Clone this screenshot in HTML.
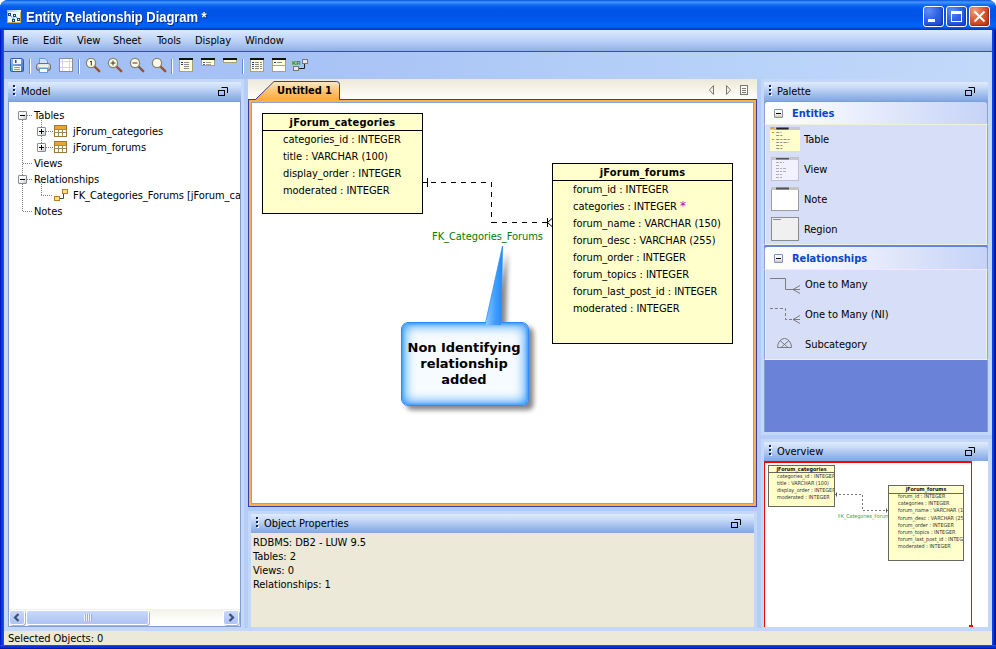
<!DOCTYPE html>
<html><head><meta charset="utf-8"><title>Entity Relationship Diagram</title>
<style>
*{box-sizing:border-box;margin:0;padding:0}
html,body{width:996px;height:649px;overflow:hidden;background:#fff}
body{font-family:"DejaVu Sans Condensed","Liberation Sans",sans-serif;font-size:11px;color:#000;position:relative;letter-spacing:-0.05px}
.abs{position:absolute}
.t{position:absolute;white-space:nowrap;line-height:13px}
#win{position:absolute;left:0;top:0;width:996px;height:649px;background:linear-gradient(90deg,#0018c0 0,#0018c0 1px,#0534de 1px,#0a40e6 3px,#0a58ec 3px,#0a58ec 4px,#0a40e6 4px,#0a40e6 992px,#0a48ea 992px,#0838e0 994px,#0020b0 994px,#001088 996px);border-radius:8px 8px 0 0;overflow:hidden}
#title{position:absolute;left:0;top:0;width:996px;height:30px;background:linear-gradient(180deg,#0a52da 0%,#2f86f8 5%,#3d92fb 9%,#1a70f2 15%,#0560ec 22%,#0056e8 32%,#0054e6 52%,#005aee 68%,#0062fa 82%,#0060f6 88%,#0052e4 93%,#0040cc 97%,#0034b8 100%)}
#title .cap{position:absolute;left:26px;top:9px;font-family:"Liberation Sans",sans-serif;font-weight:bold;font-size:14px;transform:scaleX(0.935);transform-origin:0 0;color:#fff;text-shadow:1px 1px 0 #0a2a8a;letter-spacing:-0.1px;line-height:17px;white-space:nowrap}
#client{position:absolute;left:4px;top:30px;width:988px;height:615px;background:#c3d8f9}
#menubar{position:absolute;left:0;top:0;width:988px;height:21px;background:linear-gradient(180deg,#dde9fc 0%,#cfe0fa 22%,#b6cef4 58%,#9bb8ea 88%,#90b0e6 100%)}
#menuline{position:absolute;left:0;top:21px;width:988px;height:1px;background:#3b4fa0}
#toolbar{position:absolute;left:0;top:22px;width:988px;height:27px;background:linear-gradient(90deg,#a2bff4 0%,#a7c3f5 30%,#b2cdf7 60%,#c3d9fa 100%)}
.mi{position:absolute;top:4px;line-height:13px}
.ph{position:absolute;height:19px;background:linear-gradient(180deg,#dfeafc 0%,#ccddf8 25%,#b1caf1 50%,#98b7ea 75%,#82a7e3 100%)}
.ph .lbl{position:absolute;left:13px;top:3px;line-height:13px;white-space:nowrap}
.ph .grip{position:absolute;left:5px;top:3px;width:3px;height:11px;background:radial-gradient(circle,#000 0,#000 0) 0 0/0 0 no-repeat}
.ph .grip i{position:absolute;left:0;width:2px;height:2px;background:#14246e;box-shadow:1px 1px 0 #fff}
.ph .mx{position:absolute;right:13px;top:5px;width:10px;height:9px}
.sep{position:absolute;top:7px;width:1px;height:15px;background:#6a8ad2;box-shadow:1px 0 0 #fff}

/* panels */
.panel{position:absolute;background:#fff}
.tree .t{line-height:13px}
.dotsh{position:absolute;height:1px;background:repeating-linear-gradient(90deg,#808080 0,#808080 1px,transparent 1px,transparent 2px)}
.dotsv{position:absolute;width:1px;background:repeating-linear-gradient(180deg,#808080 0,#808080 1px,transparent 1px,transparent 2px)}
.pm{position:absolute;width:9px;height:9px;border:1px solid #7e8ba3;background:linear-gradient(135deg,#fff 0%,#fff 40%,#c9c6b8 100%);border-radius:1px}
.pm:before{content:"";position:absolute;left:1px;top:3px;width:5px;height:1px;background:#000}
.pm.plus:after{content:"";position:absolute;left:3px;top:1px;width:1px;height:5px;background:#000}
.ent{position:absolute;background:#ffffcc;border:1px solid #000}
.ent .hd{position:absolute;left:0;top:0;right:0;height:17px;border-bottom:1px solid #000;text-align:center;font-weight:bold;line-height:17px;font-size:11px;letter-spacing:0.200px}
.ent .r{position:absolute;left:20px;white-space:nowrap;line-height:13px}

.sbb{width:14px;height:13px;border-radius:2px;background:linear-gradient(180deg,#c9d9fb 0%,#bacdf7 50%,#aec4f5 100%);box-shadow:0 0 0 1px #fff, 1px 1px 0 1px #9fb5e2}

.sec{position:absolute;left:764px;width:224px;border-left:1px solid #8aa4d4;border-right:1px solid #8aa4d4}
.sech{position:absolute;left:764px;width:224px;height:23px;border-radius:3px 3px 0 0;background:linear-gradient(90deg,#ffffff 0%,#eef2fd 35%,#c6d3f7 100%);border-left:1px solid #8aa4d4;border-right:1px solid #8aa4d4}
.sech b{position:absolute;left:27px;top:5px;line-height:13px;color:#0c46c4;font-size:11px;white-space:nowrap}
.pm2{position:absolute;left:9px;top:7px;width:9px;height:9px;border:1px solid #7a92b8;border-radius:1px;background:linear-gradient(180deg,#fff 0%,#f4f2ea 55%,#cfc9b8 100%)}
.pm2:before{content:"";position:absolute;left:1px;top:3px;width:5px;height:1px;background:#000}
.secb{position:absolute;left:764px;width:224px;background:#d6dff7;border-left:1px solid #8aa4d4;border-top:1px solid #f1eedc;border-bottom:1px solid #f1eedc;border-right:1px solid #8aa4d4;box-shadow:inset 1px 0 0 #f1eedc,inset -1px 0 0 #f1eedc}
.secb .t{left:40px}

.ment{position:absolute;background:#ffffcc;border:1px solid #686860;overflow:hidden;font-size:5.400px;color:#333;letter-spacing:0}
.ment .hd{position:absolute;left:0;right:0;top:0;height:6px;border-bottom:1px solid #686860;text-align:center;font-weight:bold;line-height:6px;font-size:5.400px;white-space:nowrap;color:#111}
.ment .r{position:absolute;left:8px;white-space:nowrap;line-height:6px}

.tbtn{position:absolute;top:6px;width:21px;height:21px;border:1px solid #fff;border-radius:3px;background:radial-gradient(circle at 25% 20%,#5f8ff5 0%,#2f62e8 45%,#1b45cf 100%);box-shadow:inset -1px -1px 2px rgba(0,20,120,.5)}
.tbtn.close{background:radial-gradient(circle at 25% 20%,#f0a080 0%,#e0552e 45%,#c23210 100%);box-shadow:inset -1px -1px 2px rgba(100,10,0,.5)}
</style></head><body>
<div id="win">
<div id="title">
  <svg class="abs" style="left:7px;top:10px" width="14" height="13" viewBox="0 0 14 13"><defs><linearGradient id="ib" x1="0" y1="0" x2="1" y2="0"><stop offset="0" stop-color="#8cc0ee"/><stop offset="1" stop-color="#f4f8fe"/></linearGradient></defs><rect x="0" y="2" width="14" height="11" fill="#d9a94a"/><rect x="1" y="2" width="12" height="10" fill="#eef6ff"/><rect x="0" y="0" width="14" height="2" fill="url(#ib)"/><path d="M2.500 4.500 L6.500 9.500 M7.500 5.500 L6.500 9.500 M7.500 5.500 L11.500 9" stroke="#1c5a9a" stroke-dasharray="1 1" fill="none"/><rect x="1.500" y="3.500" width="2" height="2" fill="#fff" stroke="#0c4a8a"/><rect x="6.500" y="4.500" width="2" height="2" fill="#fff" stroke="#0c4a8a"/><rect x="5.500" y="9.500" width="2" height="2" fill="#fff" stroke="#0c4a8a"/><rect x="10.500" y="8.500" width="2" height="2" fill="#fff" stroke="#0c4a8a"/></svg>
  <div class="cap">Entity Relationship Diagram *</div>
  <div class="tbtn" style="left:923px"><div class="abs" style="left:4px;top:12px;width:7px;height:3px;background:#fff"></div></div>
  <div class="tbtn" style="left:946px"><div class="abs" style="left:4px;top:4px;width:11px;height:11px;border:1px solid #fff;border-top-width:3px"></div></div>
  <div class="tbtn close" style="left:969px"><svg class="abs" style="left:3px;top:3px" width="13" height="13" viewBox="0 0 13 13"><path d="M1.500 1.500 L11.500 11.500 M11.500 1.500 L1.500 11.500" stroke="#fff" stroke-width="2"/></svg></div>

</div>
<div id="client">
  <div id="menubar">
    <span class="mi" style="left:8px">File</span>
    <span class="mi" style="left:39px">Edit</span>
    <span class="mi" style="left:73px">View</span>
    <span class="mi" style="left:109px">Sheet</span>
    <span class="mi" style="left:153px">Tools</span>
    <span class="mi" style="left:191px">Display</span>
    <span class="mi" style="left:241px">Window</span>
  </div>
  <div id="menuline"></div>
  <div id="toolbar">
    <!-- save -->
    <svg class="abs" style="left:6px;top:6px" width="14" height="14" viewBox="0 0 14 14"><defs><linearGradient id="sv" x1="0" y1="0" x2="1" y2="1"><stop offset="0" stop-color="#9fbff0"/><stop offset="1" stop-color="#3f6fc4"/></linearGradient></defs><path d="M0.500 1.500 Q0.500 0.500 1.500 0.500 H12 L13.500 2 V12.500 Q13.500 13.500 12.500 13.500 H1.500 Q0.500 13.500 0.500 12.500 Z" fill="url(#sv)" stroke="#2f5cab"/><rect x="3" y="1" width="8" height="5" fill="#f4f7fd"/><rect x="5" y="2" width="1.500" height="3" fill="#2f4f8f"/><rect x="3" y="8" width="8" height="5" fill="#fff"/><rect x="4" y="9" width="6" height="1.200" fill="#7fbf3f"/><rect x="4" y="11" width="6" height="1.200" fill="#7fbf3f"/></svg>
    <div class="sep" style="left:25px"></div>
    <!-- print -->
    <svg class="abs" style="left:32px;top:6px" width="15" height="15" viewBox="0 0 15 15"><defs><linearGradient id="pg" x1="0" y1="0" x2="0" y2="1"><stop offset="0" stop-color="#f4f4f4"/><stop offset="0.500" stop-color="#c8c8c8"/><stop offset="1" stop-color="#8e8e8e"/></linearGradient></defs><path d="M3.500 7 V0.500 H9 L11.500 3 V7 Z" fill="#cfe2fa" stroke="#5f9be0"/><rect x="0.500" y="5.500" width="14" height="7" rx="2.500" fill="url(#pg)" stroke="#6e6e6e"/><rect x="3.500" y="10.500" width="8" height="4" fill="#fff" stroke="#5f9be0"/><rect x="3" y="7.500" width="9" height="1.500" fill="#f8f8f8"/></svg>
    <!-- grid -->
    <svg class="abs" style="left:55px;top:6px" width="14" height="14" viewBox="0 0 14 14"><rect x="0.500" y="0.500" width="13" height="13" fill="#fff" stroke="#8c8c90"/><path d="M3.500 1 V13 M10.500 1 V13 M1 3.500 H13 M1 9.500 H13" stroke="#d4d0f8" fill="none"/></svg>
    <div class="sep" style="left:74px"></div>
    <!-- zoom 1 -->
    <svg class="abs" style="left:81px;top:5px" width="16" height="16" viewBox="0 0 16 16"><path d="M9.500 9.500 L14.200 14.200" stroke="#9b5230" stroke-width="2.400" stroke-linecap="round"/><circle cx="6" cy="6" r="4.600" fill="#fffbe8" stroke="#86866e" stroke-width="1.300"/><path d="M5 5 L6.300 4 V8.500" stroke="#333" fill="none" stroke-width="1"/></svg>
    <svg class="abs" style="left:103px;top:5px" width="16" height="16" viewBox="0 0 16 16"><path d="M9.500 9.500 L14.200 14.200" stroke="#9b5230" stroke-width="2.400" stroke-linecap="round"/><circle cx="6" cy="6" r="4.600" fill="#fffbe8" stroke="#86866e" stroke-width="1.300"/><path d="M3.500 6 H8.500 M6 3.500 V8.500" stroke="#3a3a20" fill="none" stroke-width="1"/></svg>
    <svg class="abs" style="left:125px;top:5px" width="16" height="16" viewBox="0 0 16 16"><path d="M9.500 9.500 L14.200 14.200" stroke="#9b5230" stroke-width="2.400" stroke-linecap="round"/><circle cx="6" cy="6" r="4.600" fill="#fffbe8" stroke="#86866e" stroke-width="1.300"/><path d="M3.500 6 H8.500" stroke="#5a2a20" fill="none" stroke-width="1"/></svg>
    <svg class="abs" style="left:147px;top:5px" width="16" height="16" viewBox="0 0 16 16"><path d="M9.500 9.500 L14.200 14.200" stroke="#9b5230" stroke-width="2.400" stroke-linecap="round"/><circle cx="6" cy="6" r="4.600" fill="#fffbe8" stroke="#86866e" stroke-width="1.300"/></svg>
    <div class="sep" style="left:167px"></div>
    <!-- display icons -->
    <svg class="abs" style="left:175px;top:6px" width="14" height="14" viewBox="0 0 14 14"><rect x="0.500" y="0.500" width="13" height="13" fill="#ffffd8" stroke="#a8a078"/><rect x="0" y="0" width="14" height="2" fill="#111"/><path d="M2 4.500 H4 M2 6.500 H4" stroke="#1a3a9a"/><path d="M5 4.500 H10 M5 6.500 H10 M5 8.500 H10 M5 10.500 H10" stroke="#8c8c8c"/></svg>
    <svg class="abs" style="left:197px;top:6px" width="14" height="8" viewBox="0 0 14 8"><rect x="0.500" y="0.500" width="13" height="7" fill="#ffffd8" stroke="#a8a078"/><rect x="0" y="0" width="14" height="2" fill="#111"/><path d="M2 4.500 H4 M2 6.500 H4" stroke="#1a3a9a" stroke-width="0.800"/><path d="M5 4.500 H10 M5 6.500 H10" stroke="#8c8c8c" stroke-width="0.800"/></svg>
    <svg class="abs" style="left:219px;top:6px" width="14" height="5" viewBox="0 0 14 5"><rect x="0.500" y="0.500" width="13" height="4" fill="#ffffd8" stroke="#a8a078"/><rect x="0" y="0" width="14" height="2" fill="#111"/></svg>
    <div class="sep" style="left:238px"></div>
    <svg class="abs" style="left:246px;top:6px" width="14" height="14" viewBox="0 0 14 14"><rect x="0.500" y="0.500" width="13" height="13" fill="#ffffd8" stroke="#a8a078"/><rect x="0" y="0" width="14" height="2" fill="#111"/><path d="M2 4.500 H4 M2 6.500 H4" stroke="#1a3a9a"/><path d="M2 8.500 H4 M2 10.500 H4" stroke="#5a6a9a"/><path d="M5 4.500 H9 M10 4.500 H12 M5 6.500 H9 M10 6.500 H12 M5 8.500 H9 M10 8.500 H12 M5 10.500 H9 M10 10.500 H12" stroke="#8c8c8c"/></svg>
    <svg class="abs" style="left:268px;top:6px" width="14" height="14" viewBox="0 0 14 14"><rect x="0.500" y="0.500" width="13" height="13" fill="#ffffd8" stroke="#a8a078"/><rect x="1" y="8" width="12" height="5" fill="#fff"/><path d="M0 7.500 H14" stroke="#a8a078"/><rect x="0" y="0" width="14" height="2" fill="#111"/><path d="M2 4.500 H4" stroke="#1a3a9a"/><path d="M5 4.500 H10" stroke="#8c8c8c"/></svg>
    <svg class="abs" style="left:288px;top:7px" width="16" height="12" viewBox="0 0 16 12"><path d="M6 9.500 H12.500 V4" stroke="#222" fill="none"/><rect x="10.500" y="0.500" width="5" height="4" fill="#e8e8e8" stroke="#777"/><rect x="1.500" y="7.500" width="5" height="4" fill="#e8e8e8" stroke="#777"/><text x="0" y="6" font-family="Liberation Sans,sans-serif" font-size="6" font-weight="bold" fill="#1f8a1f">KR</text></svg>
  </div>
</div>

<!-- ===== splitters ===== -->
<div class="abs" style="left:244px;top:79px;width:4px;height:549px;background:#b5cdf6"></div>
<div class="abs" style="left:757px;top:79px;width:4px;height:549px;background:#b5cdf6"></div>
<div class="abs" style="left:248px;top:507px;width:509px;height:4px;background:#b0c9f5"></div>
<div class="abs" style="left:761px;top:435px;width:231px;height:4px;background:#b5cdf6"></div>
<!-- ===== Model panel ===== -->
<div class="ph" style="left:8px;top:82px;width:233px"><div class="grip"><i style="top:0"></i><i style="top:4px"></i><i style="top:8px"></i></div><div class="lbl">Model</div>
  <svg class="mx" viewBox="0 0 10 9"><path d="M3.500 0.500 H9.500 V6" stroke="#000" fill="none"/><rect x="0.500" y="3.500" width="6" height="5" fill="none" stroke="#000"/></svg></div>
<div class="panel tree" id="model" style="left:8px;top:101px;width:233px;height:526px;border-top:1px solid #7f9fd3;border-left:1px solid #7f9fd3;border-right:1px solid #7f9fd3;border-bottom:1px solid #7f9fd3">
</div>

<div class="abs" id="treelayer" style="left:0;top:0;width:0;height:0">
  <div class="dotsv" style="left:22px;top:120px;height:91px"></div>
  <div class="dotsv" style="left:41px;top:120px;height:7px"></div>
  <div class="dotsv" style="left:41px;top:136px;height:7px"></div>
  <div class="dotsv" style="left:41px;top:184px;height:11px"></div>
  <div class="dotsh" style="left:27px;top:115px;width:6px"></div>
  <div class="dotsh" style="left:46px;top:131px;width:7px"></div>
  <div class="dotsh" style="left:46px;top:147px;width:7px"></div>
  <div class="dotsh" style="left:23px;top:163px;width:10px"></div>
  <div class="dotsh" style="left:27px;top:179px;width:6px"></div>
  <div class="dotsh" style="left:41px;top:195px;width:12px"></div>
  <div class="dotsh" style="left:23px;top:211px;width:10px"></div>
  <div class="pm" style="left:18px;top:111px"></div>
  <div class="pm plus" style="left:37px;top:127px"></div>
  <div class="pm plus" style="left:37px;top:143px"></div>
  <div class="pm" style="left:18px;top:175px"></div>
  <div class="t" style="left:34px;top:109px">Tables</div>
  <svg class="abs" style="left:54px;top:125px" width="13" height="12" viewBox="0 0 13 12"><rect x="0.500" y="0.500" width="12" height="11" fill="#fff" stroke="#9a7a3a"/><rect x="1" y="1" width="11" height="3" fill="#e8a33d"/><path d="M1 4.500 H12 M1 7.500 H12 M4.500 4 V11 M8.500 4 V11" stroke="#9a8a6a" fill="none"/></svg>
  <div class="t" style="left:73px;top:125px">jForum_categories</div>
  <svg class="abs" style="left:54px;top:141px" width="13" height="12" viewBox="0 0 13 12"><rect x="0.500" y="0.500" width="12" height="11" fill="#fff" stroke="#9a7a3a"/><rect x="1" y="1" width="11" height="3" fill="#e8a33d"/><path d="M1 4.500 H12 M1 7.500 H12 M4.500 4 V11 M8.500 4 V11" stroke="#9a8a6a" fill="none"/></svg>
  <div class="t" style="left:73px;top:141px">jForum_forums</div>
  <div class="t" style="left:34px;top:157px">Views</div>
  <div class="t" style="left:34px;top:173px">Relationships</div>
  <svg class="abs" style="left:54px;top:189px" width="14" height="12" viewBox="0 0 14 12"><path d="M6 9.500 H9.500 V5" stroke="#444" fill="none"/><rect x="8.500" y="0.500" width="5" height="4" fill="#ffe08a" stroke="#c07a20"/><rect x="0.500" y="7.500" width="5" height="4" fill="#ffe08a" stroke="#c07a20"/></svg>
  <div class="t" style="left:73px;top:189px;width:167px;overflow:hidden">FK_Categories_Forums [jForum_categories]</div>
  <div class="t" style="left:34px;top:205px">Notes</div>
  <!-- scrollbar -->
  <div class="abs" style="left:9px;top:609px;width:231px;height:17px;background:linear-gradient(180deg,#f3f1e8 0%,#fdfdfb 60%,#fff 100%)"></div>
  <div class="abs sbb" style="left:10px;top:611px"><svg width="14" height="13" viewBox="0 0 14 13"><path d="M8.500 3 L5 6.500 L8.500 10" stroke="#3f4f78" stroke-width="2.200" fill="none"/></svg></div>
  <div class="abs sbb" style="left:224px;top:611px"><svg width="14" height="13" viewBox="0 0 14 13"><path d="M5.500 3 L9 6.500 L5.500 10" stroke="#3f4f78" stroke-width="2.200" fill="none"/></svg></div>
  <div class="abs sbb" style="left:27px;top:611px;width:121px"><div class="abs" style="left:57px;top:3px;width:8px;height:7px;background:repeating-linear-gradient(90deg,#eef4fe 0,#eef4fe 1px,#8cb0f8 1px,#8cb0f8 2px)"></div></div>
</div>
<!-- ===== Center tabbed canvas ===== -->
<div class="abs" id="tabstrip" style="left:248px;top:79px;width:509px;height:21px;background:linear-gradient(180deg,#ece9d8 0%,#f6f4ea 50%,#ffffff 100%)"></div>
<div class="abs" id="canvas" style="left:248px;top:99px;width:509px;height:408px;background:#fff;border:1px solid #353fa0;box-shadow:inset 0 0 0 2px #ffb048, inset 0 0 0 3px #86a4d6"></div>

<!-- ===== canvas content ===== -->
<div class="abs" id="cv" style="left:0;top:0;width:0;height:0">
  <!-- tab -->
  <svg class="abs" style="left:248px;top:79px" width="100" height="22" viewBox="0 0 100 22"><defs><linearGradient id="tg" x1="0" y1="0" x2="0" y2="1"><stop offset="0" stop-color="#ffe9c8"/><stop offset="0.450" stop-color="#ffc878"/><stop offset="1" stop-color="#ffa83c"/></linearGradient></defs><path d="M0.500 21 L7.500 20.500 L26 2.500 H88.500 Q91.500 2.500 91.500 5.500 V21 Z" fill="url(#tg)"/><path d="M0.500 20.500 H7.500 L26 2.500 H88.500 Q91.500 2.500 91.500 5.500 V20.500" fill="none" stroke="#353fa0"/></svg>
  <div class="t" style="left:277px;top:84px;font-weight:bold">Untitled 1</div>
  <svg class="abs" style="left:708px;top:84px" width="42" height="12" viewBox="0 0 42 12"><path d="M5.500 1.500 V10.500 L1.500 6 Z" fill="none" stroke="#7d7a6a"/><path d="M18.500 1.500 V10.500 L22.500 6 Z" fill="none" stroke="#7d7a6a"/><rect x="32.500" y="1.500" width="7" height="9" fill="#fff" stroke="#7d7a6a"/><path d="M34 4.500 H38 M34 6.500 H38 M34 8.500 H38" stroke="#7d7a6a"/></svg>

  <!-- entity 1 -->
  <div class="ent" style="left:262px;top:113px;width:161px;height:101px"><div class="hd">jForum_categories</div>
    <div class="r" style="top:19px">categories_id : INTEGER</div>
    <div class="r" style="top:36px">title : VARCHAR (100)</div>
    <div class="r" style="top:53px">display_order : INTEGER</div>
    <div class="r" style="top:70px">moderated : INTEGER</div>
  </div>
  <!-- entity 2 -->
  <div class="ent" style="left:552px;top:163px;width:181px;height:181px"><div class="hd">jForum_forums</div>
    <div class="r" style="top:19px">forum_id : INTEGER</div>
    <div class="r" style="top:36px">categories : INTEGER <span style="color:#b400b4;font-size:13px;line-height:10px">*</span></div>
    <div class="r" style="top:53px">forum_name : VARCHAR (150)</div>
    <div class="r" style="top:70px">forum_desc : VARCHAR (255)</div>
    <div class="r" style="top:87px">forum_order : INTEGER</div>
    <div class="r" style="top:104px">forum_topics : INTEGER</div>
    <div class="r" style="top:121px">forum_last_post_id : INTEGER</div>
    <div class="r" style="top:138px">moderated : INTEGER</div>
  </div>
  <!-- relationship -->
  <svg class="abs" style="left:420px;top:170px" width="140" height="65" viewBox="420 170 140 65" shape-rendering="crispEdges"><path d="M423 182.500 H428" fill="none" stroke="#000"/><path d="M431 182.500 H492" fill="none" stroke="#000" stroke-dasharray="5 5"/><path d="M491.500 182 V223" fill="none" stroke="#000" stroke-dasharray="5 5"/><path d="M492 222.500 H552" fill="none" stroke="#000" stroke-dasharray="5 5"/><path d="M427.500 178 V187 M547.500 218 V227" stroke="#000" fill="none"/><path d="M547.500 222.500 L552 218.500 M547.500 222.500 L552 226.500" stroke="#000" fill="none" shape-rendering="auto"/></svg>
  <div class="t" style="left:432px;top:230px;color:#007d00">FK_Categories_Forums</div>
  <!-- callout -->
  <svg class="abs" style="left:390px;top:240px" width="170" height="180" viewBox="390 240 170 180">
    <defs>
      <filter id="sh" x="-20%" y="-20%" width="150%" height="150%"><feGaussianBlur stdDeviation="2.600"/></filter>
      <linearGradient id="pt" x1="0" y1="0" x2="1" y2="0"><stop offset="0" stop-color="#8cc8ff"/><stop offset="0.600" stop-color="#3d9dff"/><stop offset="1" stop-color="#2488f8"/></linearGradient>
    </defs>
    <path d="M502.500 246 L501 322 H522 Q528.500 322 528.500 328 V399 Q528.500 405 522 405 H408 Q401.500 405 401.500 399 V328 Q401.500 322 408 322 H485.500 Z" transform="translate(5,5)" fill="#000" opacity="0.480" filter="url(#sh)"/>
    <path d="M502.500 246 L501 323 H485.500 Z" fill="url(#pt)" stroke="#2b8fff" stroke-width="0.800"/>
  </svg>
  <div class="abs" style="left:401px;top:322px;width:128px;height:84px;border:1px solid #2a8cff;border-radius:7px;background:#f6fbff;box-shadow:inset 0 0 11px 3px #3a9cff, inset 0 0 3px 1px #3a9cff"></div>
  <div class="abs" style="left:486px;top:320px;width:15px;height:5px;background:linear-gradient(90deg,#8cc8ff,#3d9dff 60%,#2e90fb)"></div>
  <div class="abs" style="left:400px;top:340px;width:128px;text-align:center;font-family:'DejaVu Sans','Liberation Sans',sans-serif;font-weight:bold;font-size:13px;line-height:16px;letter-spacing:-0.050px;white-space:nowrap">Non Identifying<br>relationship<br>added</div>
</div>
<!-- ===== Object properties ===== -->
<div class="ph" style="left:251px;top:514px;width:503px"><div class="grip"><i style="top:0"></i><i style="top:4px"></i><i style="top:8px"></i></div><div class="lbl">Object Properties</div>
  <svg class="mx" viewBox="0 0 10 9"><path d="M3.500 0.500 H9.500 V6" stroke="#000" fill="none"/><rect x="0.500" y="3.500" width="6" height="5" fill="none" stroke="#000"/></svg></div>
<div class="abs" id="props" style="left:251px;top:533px;width:503px;height:94px;background:#ece9d8">
  <div class="t" style="left:2px;top:3px">RDBMS: DB2 - LUW 9.5</div>
  <div class="t" style="left:2px;top:17px">Tables: 2</div>
  <div class="t" style="left:2px;top:31px">Views: 0</div>
  <div class="t" style="left:2px;top:45px">Relationships: 1</div>
</div>
<!-- ===== Palette ===== -->
<div class="ph" style="left:764px;top:82px;width:224px"><div class="grip"><i style="top:0"></i><i style="top:4px"></i><i style="top:8px"></i></div><div class="lbl">Palette</div>
  <svg class="mx" viewBox="0 0 10 9"><path d="M3.500 0.500 H9.500 V6" stroke="#000" fill="none"/><rect x="0.500" y="3.500" width="6" height="5" fill="none" stroke="#000"/></svg></div>
<div class="abs" id="palette" style="left:764px;top:101px;width:224px;height:331px;background:#6a83d9;border-top:1px solid #7f9fd3;border-left:1px solid #7f9fd3;border-right:1px solid #7f9fd3"></div>
<div class="sech" style="top:102px"><div class="pm2"></div><b>Entities</b></div>
<div class="secb" style="top:124px;height:121px">
  <!-- table icon -->
  <svg class="abs" style="left:5px;top:2px" width="30" height="24" viewBox="0 0 29 24" preserveAspectRatio="none"><rect x="0" y="0" width="29" height="24" fill="#ffffcc"/><rect x="0" y="0" width="29" height="3" fill="#c8c8c8"/><rect x="1" y="0" width="3" height="2" fill="#e8a020"/><rect x="6" y="0.500" width="12" height="2" fill="#222"/><path d="M2 5.500 H4 M2 12.500 H4" stroke="#d89010"/><path d="M6 5.500 H11 M6 8.500 H13 M6 12.500 H20 M6 15.500 H18 M6 18.500 H13 M6 21.500 H12" stroke="#555" stroke-opacity="0.800" stroke-width="0.800" stroke-dasharray="3 1 2 1"/></svg>
  <div class="t" style="left:39px;top:8px">Table</div>
  <svg class="abs" style="left:6px;top:32px" width="28" height="24" viewBox="0 0 28 24"><rect x="0" y="0" width="28" height="24" fill="#f1f1ff"/><rect x="0" y="0" width="28" height="3" fill="#c8c8c8"/><rect x="5" y="0.500" width="13" height="2" fill="#555"/><path d="M5 5.500 H13 M5 8.500 H9 M5 11.500 H15 M5 14.500 H16 M5 17.500 H11 M5 20.500 H12 M5 23.500 H11" stroke="#778" stroke-opacity="0.700" stroke-width="0.800" stroke-dasharray="3 1 2 1"/><rect x="0.500" y="0.500" width="27" height="23" fill="none" stroke="#c0c0d0"/></svg>
  <div class="t" style="left:39px;top:38px">View</div>
  <svg class="abs" style="left:6px;top:62px" width="28" height="24" viewBox="0 0 28 24"><rect x="0.500" y="0.500" width="27" height="23" fill="#fff" stroke="#9c9c9c"/><rect x="0" y="0" width="28" height="3" fill="#c4c4c4"/><rect x="5" y="0.500" width="13" height="2" fill="#555"/></svg>
  <div class="t" style="left:39px;top:68px">Note</div>
  <svg class="abs" style="left:6px;top:92px" width="28" height="24" viewBox="0 0 28 24"><rect x="0.500" y="0.500" width="27" height="23" fill="#f0f0f0" stroke="#8c8c8c"/><path d="M2 2.500 H10" stroke="#888"/></svg>
  <div class="t" style="left:39px;top:98px">Region</div>
</div>

<div class="sech" style="top:247px"><div class="pm2"></div><b>Relationships</b></div>
<div class="secb" style="top:269px;height:91px">
  <svg class="abs" style="left:4px;top:6px" width="34" height="22" viewBox="0 0 34 22"><path d="M1 2.500 H16.500 V13.500 H31 M24 13.500 L31 9.500 M24 13.500 L31 17.500" fill="none" stroke="#707070" stroke-width="0.900"/></svg>
  <div class="t" style="top:8px">One to Many</div>
  <svg class="abs" style="left:4px;top:36px" width="34" height="22" viewBox="0 0 34 22"><path d="M1 2.500 H16.500 V13.500 H24" fill="none" stroke="#707070" stroke-width="0.900" stroke-dasharray="3 2"/><path d="M24 13.500 H31 M24 13.500 L31 9.500 M24 13.500 L31 17.500" fill="none" stroke="#707070" stroke-width="0.900"/></svg>
  <div class="t" style="top:38px">One to Many (NI)</div>
  <svg class="abs" style="left:11px;top:67px" width="17" height="12" viewBox="0 0 17 12"><path d="M1.500 10.500 A7 9 0 0 1 15.500 10.500 Z M4 3.500 L12 10.500 M13 3.500 L5 10.500" fill="none" stroke="#707070" stroke-width="0.900"/></svg>
  <div class="t" style="top:68px">Subcategory</div>
</div>
<!-- ===== Overview ===== -->
<div class="ph" style="left:764px;top:442px;width:224px"><div class="grip"><i style="top:0"></i><i style="top:4px"></i><i style="top:8px"></i></div><div class="lbl">Overview</div>
  <svg class="mx" viewBox="0 0 10 9"><path d="M3.500 0.500 H9.500 V6" stroke="#000" fill="none"/><rect x="0.500" y="3.500" width="6" height="5" fill="none" stroke="#000"/></svg></div>
<div class="abs" id="overview" style="left:764px;top:461px;width:224px;height:166px;background:#fff;overflow:hidden">
  <div class="abs" style="left:0;top:0;width:208px;height:180px;border:1px solid #ff0000;border-top-width:2px"></div>
  <div class="abs" style="left:205px;top:164px;width:4px;height:2px;background:#ff0000"></div>
  <div class="abs" style="left:74px;top:52px;font-size:5.300px;line-height:6px;color:#3a9a3a;white-space:nowrap;letter-spacing:0">FK_Categories_Forums</div>
  <div class="ment" style="left:4px;top:4px;width:67px;height:42px"><div class="hd" style="height:7px">jForum_categories</div>
    <div class="r" style="top:7px">categories_id : INTEGER</div>
    <div class="r" style="top:14px">title : VARCHAR (100)</div>
    <div class="r" style="top:21px">display_order : INTEGER</div>
    <div class="r" style="top:28px">moderated : INTEGER</div>
  </div>
  <div class="ment" style="left:124px;top:24px;width:76px;height:76px"><div class="hd" style="height:8px;line-height:7px">jForum_forums</div>
    <div class="r" style="left:9px;top:7px">forum_id : INTEGER</div>
    <div class="r" style="left:9px;top:14px">categories : INTEGER</div>
    <div class="r" style="left:9px;top:21px">forum_name : VARCHAR (150)</div>
    <div class="r" style="left:9px;top:28.500px">forum_desc : VARCHAR (255)</div>
    <div class="r" style="left:9px;top:35.500px">forum_order : INTEGER</div>
    <div class="r" style="left:9px;top:42.500px">forum_topics : INTEGER</div>
    <div class="r" style="left:9px;top:50px">forum_last_post_id : INTEGER</div>
    <div class="r" style="left:9px;top:57px">moderated : INTEGER</div>
  </div>
  <svg class="abs" style="left:70px;top:30px" width="56" height="22" viewBox="0 0 56 22"><path d="M1 3.500 H28.500 V19.500 H54" fill="none" stroke="#777" stroke-dasharray="2 2"/><path d="M2.500 1.500 V5.500 M52.500 17.500 V21.500" stroke="#555"/></svg>
</div>
<div class="abs" style="left:0;top:645px;width:996px;height:4px;background:linear-gradient(180deg,#0a50ea 0,#0a50ea 1px,#0535dc 1px,#0330d4 3px,#001ab0 3px)"></div>
<!-- ===== Status bar ===== -->
<div class="abs" id="status" style="left:4px;top:631px;width:988px;height:14px;background:#ece9d8"><div class="t" style="left:4px;top:1px">Selected Objects: 0</div></div>
</div>
</body></html>
